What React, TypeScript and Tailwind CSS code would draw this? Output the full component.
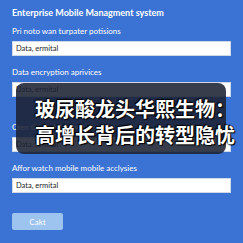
import React from 'react';

const fields = [
  { label: 'Pri noto wan turpater potisions', value: 'Data, ermital' },
  { label: 'Data encryption aprivices', value: 'Data, ermital' },
  { label: 'Cren thi mobile aproutions', value: 'Data, ermital' },
  { label: 'Affor watch mobile mobile acclysies', value: 'Data, ermital' },
];

export default function App() {
  return (
    <div className="relative w-[243px] h-[243px] overflow-hidden bg-[#3b73d5] font-['Lato','Noto_Sans',sans-serif] text-white">
      <div className="px-3 pt-[7px]">
        <h1 className="text-[9px] font-bold leading-[12px]">Enterprise Mobile Managment system</h1>

        <div className="mt-[6px] flex flex-col">
          {fields.map((f, i) => (
            <div key={i} className={i === 2 ? 'mt-[24px]' : i > 0 ? 'mt-[10px]' : ''}>
              <p className="text-[8px] leading-[12px]">{f.label}</p>
              <div className="mt-[4px] h-[15px] w-[219px] bg-white border border-[#cfd8e6] px-[3px] flex items-center">
                <span className="text-[7.5px] text-[#222]">{f.value}</span>
              </div>
            </div>
          ))}
        </div>

        <button className="mt-[20px] h-[17px] w-[51px] rounded-[2px] bg-[#9dc3ef] text-[8px] text-white">
          Cakt
        </button>
      </div>

      {/* caption overlay */}
      <div className="absolute left-[16px] top-[83px] w-[210px] h-[71px] rounded-[8px] bg-[#1c2233]/88" />
      <div className="absolute left-[35px] top-[96px] whitespace-nowrap font-['Noto_Sans_CJK_SC',sans-serif] text-[20px] font-bold leading-[26px] text-white [text-shadow:0_0_2px_#000,1px_1px_1px_#000,-1px_-1px_1px_#000]">
        <div>玻尿酸龙头华熙生物：</div>
        <div>高增长背后的转型隐忧</div>
      </div>
    </div>
  );
}
